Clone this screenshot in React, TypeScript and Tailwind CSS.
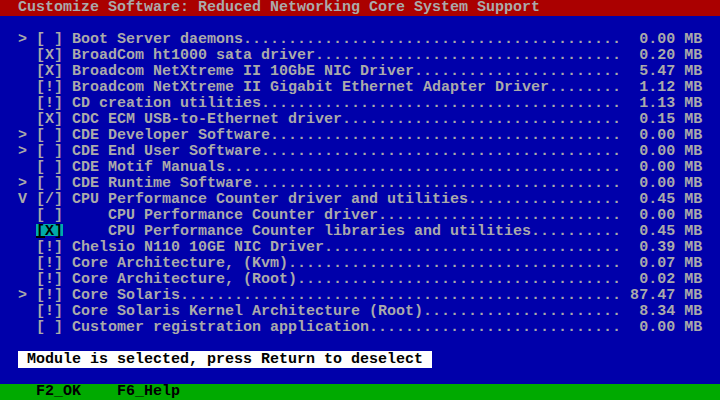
import React from 'react'

// Pantalla de texto VGA 80x25, celdas de 9x16
type Item = { arrow: string; box: string; name: string; size: string; nested?: boolean; selected?: boolean }

const items: Item[] = [
  { arrow: '>', box: '[ ]', name: 'Boot Server daemons', size: '0.00' },
  { arrow: ' ', box: '[X]', name: 'BroadCom ht1000 sata driver', size: '0.20' },
  { arrow: ' ', box: '[X]', name: 'Broadcom NetXtreme II 10GbE NIC Driver', size: '5.47' },
  { arrow: ' ', box: '[!]', name: 'Broadcom NetXtreme II Gigabit Ethernet Adapter Driver', size: '1.12' },
  { arrow: ' ', box: '[!]', name: 'CD creation utilities', size: '1.13' },
  { arrow: ' ', box: '[X]', name: 'CDC ECM USB-to-Ethernet driver', size: '0.15' },
  { arrow: '>', box: '[ ]', name: 'CDE Developer Software', size: '0.00' },
  { arrow: '>', box: '[ ]', name: 'CDE End User Software', size: '0.00' },
  { arrow: ' ', box: '[ ]', name: 'CDE Motif Manuals', size: '0.00' },
  { arrow: '>', box: '[ ]', name: 'CDE Runtime Software', size: '0.00' },
  { arrow: 'V', box: '[/]', name: 'CPU Performance Counter driver and utilities', size: '0.45' },
  { arrow: ' ', box: '[ ]', name: 'CPU Performance Counter driver', size: '0.00', nested: true },
  { arrow: ' ', box: '[X]', name: 'CPU Performance Counter libraries and utilities', size: '0.45', nested: true, selected: true },
  { arrow: ' ', box: '[!]', name: 'Chelsio N110 10GE NIC Driver', size: '0.39' },
  { arrow: ' ', box: '[!]', name: 'Core Architecture, (Kvm)', size: '0.07' },
  { arrow: ' ', box: '[!]', name: 'Core Architecture, (Root)', size: '0.02' },
  { arrow: '>', box: '[!]', name: 'Core Solaris', size: '87.47' },
  { arrow: ' ', box: '[!]', name: 'Core Solaris Kernel Architecture (Root)', size: '8.34' },
  { arrow: ' ', box: '[ ]', name: 'Customer registration application', size: '0.00' },
]

function Row({ it }: { it: Item }) {
  const start = it.nested ? 12 : 8
  const label = (' '.repeat(start - 7) + it.name).padEnd(69 - 7, '.')
  const rest = label + ' ' + it.size.padStart(5) + ' MB'
  return (
    <div className="h-[16px] flex">
      <span>{'  ' + it.arrow + ' '}</span>
      {it.selected ? (
        <span className="relative text-black">
          <span className="absolute left-0 top-0 w-[27px] h-[12px] bg-[#00aaaa]" />
          <span className="relative">{it.box}</span>
          <span className="absolute left-0 top-[12px] w-[9px] h-[2px] bg-black" />
        </span>
      ) : (
        <span>{it.box}</span>
      )}
      <span>{rest}</span>
    </div>
  )
}

export default function App() {
  return (
    <div
      className="w-[720px] h-[400px] bg-[#0000aa] text-[#aaaaaa] text-[15px] leading-[16px] font-bold whitespace-pre overflow-hidden"
      style={{ fontFamily: '"Liberation Mono", "DejaVu Sans Mono", monospace' }}
    >
      <div className="h-[16px] bg-[#aa0000]">{'  Customize Software: Reduced Networking Core System Support'}</div>
      <div className="h-[16px]" />
      {items.map((it, i) => <Row key={i} it={it} />)}
      <div className="h-[16px]" />
      <div className="h-[16px]">
        <span>{'  '}</span>
        <span className="bg-white text-black">{' Module is selected, press Return to deselect '}</span>
      </div>
      <div className="h-[16px]" />
      <div className="h-[16px] bg-[#00aa00] text-black">{'    F2_OK    F6_Help'}</div>
    </div>
  )
}
